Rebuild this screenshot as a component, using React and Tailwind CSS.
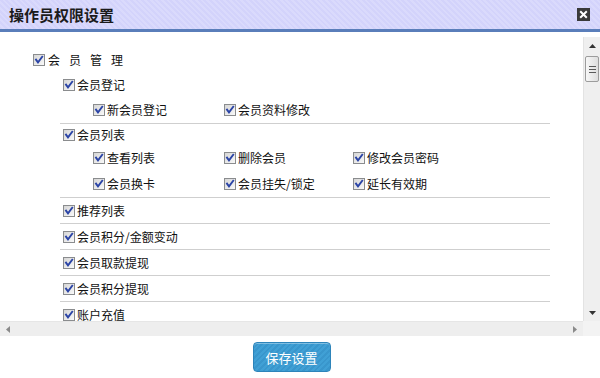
import React from "react";

function Cb() {
  return (
    <svg width="12" height="12" viewBox="0 0 12 12" className="shrink-0 block">
      <defs>
        <linearGradient id="cbg" x1="0" y1="0" x2="1" y2="1">
          <stop offset="0" stopColor="#d4d4d4" />
          <stop offset="1" stopColor="#fbfbfb" />
        </linearGradient>
      </defs>
      <rect x="0.5" y="0.5" width="11" height="11" fill="url(#cbg)" stroke="#8a8c8e" />
      <path d="M3 5.6 L5 8.3 L9.2 2.8" stroke="#2b44a6" strokeWidth="1.9" fill="none" strokeLinecap="square" />
    </svg>
  );
}

function Item({ label, className = "" }) {
  return (
    <div className={"flex items-center " + className}>
      <Cb />
      <span className="ml-[2px] text-[12px] leading-[12px] text-[#111]">{label}</span>
    </div>
  );
}

function Sep() {
  return <div className="h-px bg-[#cfcfcf]" />;
}

function Flat({ label }) {
  return (
    <>
      <div className="h-[25px] flex items-center pl-[3px]">
        <Item label={label} />
      </div>
      <Sep />
    </>
  );
}

export default function App() {
  return (
    <div className="w-[600px] h-[378px] bg-white flex flex-col overflow-hidden font-['Noto_Sans_CJK_SC','Noto_Sans',sans-serif]">
      <div className="h-[29px] flex items-center justify-between pl-[9px] pr-[10px] bg-[repeating-linear-gradient(45deg,#d3d3fb_0px,#d3d3fb_2px,#dadafc_2px,#dadafc_4px)]">
        <span className="text-[15px] font-bold text-[#1b1b1b] leading-none">操作员权限设置</span>
        <svg width="13" height="13" viewBox="0 0 13 13" className="block">
          <rect width="13" height="13" fill="#3a3a3a" />
          <path d="M3.2 3.2 L9.8 9.8 M9.8 3.2 L3.2 9.8" stroke="#fff" strokeWidth="2" />
        </svg>
      </div>
      <div className="h-[3px] bg-[#5a7eba]" />
      <div className="h-[5px]" />
      <div className="h-[299px] flex flex-col">
        <div className="flex-1 flex min-h-0">
          <div className="flex-1 overflow-hidden pt-[10px] pl-[33px]">
            <div className="h-[25px] flex items-center">
              <Cb />
              <span className="ml-[3px] text-[12px] leading-[12px] text-[#111] tracking-[9px]">会员管理</span>
            </div>
            <div className="ml-[27px] w-[490px]">
              <div className="h-[25px] flex items-center pl-[3px]">
                <Item label="会员登记" />
              </div>
              <div className="h-[26px] flex items-center pl-[33px]">
                <Item label="新会员登记" className="w-[131px]" />
                <Item label="会员资料修改" className="w-[129px]" />
              </div>
              <Sep />
              <div className="h-[21px] flex items-center pl-[3px]">
                <Item label="会员列表" />
              </div>
              <div className="h-[26px] flex items-center pl-[33px]">
                <Item label="查看列表" className="w-[131px]" />
                <Item label="删除会员" className="w-[129px]" />
                <Item label="修改会员密码" />
              </div>
              <div className="h-[26px] flex items-center pl-[33px]">
                <Item label="会员换卡" className="w-[131px]" />
                <Item label="会员挂失/锁定" className="w-[129px]" />
                <Item label="延长有效期" />
              </div>
              <Sep />
              <Flat label="推荐列表" />
              <Flat label="会员积分/金额变动" />
              <Flat label="会员取款提现" />
              <Flat label="会员积分提现" />
              <Flat label="账户充值" />
            </div>
          </div>
          <div className="w-[17px] flex flex-col bg-[#efefef] border-l border-[#e3e3e3]">
            <div className="h-[17px] flex items-center justify-center">
              <svg width="7" height="4" viewBox="0 0 7 4" className="block">
                <path d="M0 4 L3.5 0 L7 4 Z" fill="#333" />
              </svg>
            </div>
            <div className="mt-[2px] mx-[1px] h-[26px] rounded-[2px] border border-[#9c9c9c] bg-[linear-gradient(90deg,#f7f7f7,#dedede)] flex flex-col items-center justify-center gap-[2px]">
              <div className="w-[7px] h-px bg-[#5a5a5a]" />
              <div className="w-[7px] h-px bg-[#5a5a5a]" />
              <div className="w-[7px] h-px bg-[#5a5a5a]" />
            </div>
            <div className="flex-1" />
            <div className="h-[17px] flex items-center justify-center">
              <svg width="7" height="4" viewBox="0 0 7 4" className="block">
                <path d="M0 0 L3.5 4 L7 0 Z" fill="#333" />
              </svg>
            </div>
          </div>
        </div>
        <div className="h-[15px] flex">
          <div className="flex-1 bg-[#eeeeee] flex items-center justify-between px-[6px] border-t border-[#e6e6e6]">
            <svg width="4" height="7" viewBox="0 0 4 7" className="block">
              <path d="M4 0 L0 3.5 L4 7 Z" fill="#8a8a8a" />
            </svg>
            <svg width="4" height="7" viewBox="0 0 4 7" className="block">
              <path d="M0 0 L4 3.5 L0 7 Z" fill="#8a8a8a" />
            </svg>
          </div>
          <div className="w-[17px] bg-[#f3f3f3]" />
        </div>
      </div>
      <div className="flex-1 flex items-center justify-center pr-[17px]">
        <div className="w-[78px] h-[30px] rounded-[4px] border border-[#2d84ba] bg-[repeating-linear-gradient(-45deg,#40a0d5_0px,#40a0d5_2px,#3996cc_2px,#3996cc_4px)] flex items-center justify-center shadow-[inset_0_1px_0_rgba(255,255,255,0.35)]">
          <span className="text-white text-[13px] leading-none">保存设置</span>
        </div>
      </div>
    </div>
  );
}
